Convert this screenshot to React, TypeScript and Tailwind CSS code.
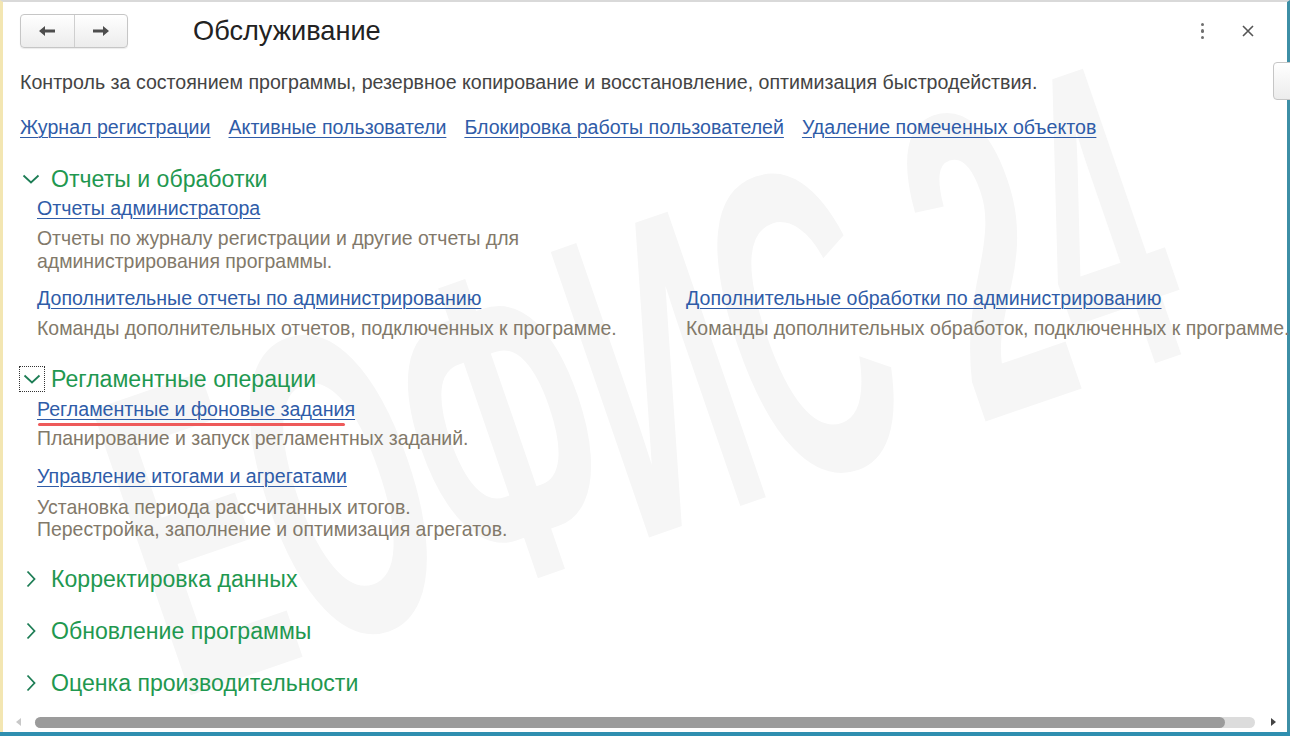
import React from "react";

function Chevron({ open }: { open: boolean }) {
  return open ? (
    <svg width="18" height="12" viewBox="0 0 18 12" className="block">
      <path d="M1.5 2.5 L9 9.5 L16.5 2.5" fill="none" stroke="#1d7d55" strokeWidth="1.8" />
    </svg>
  ) : (
    <svg width="12" height="18" viewBox="0 0 12 18" className="block">
      <path d="M2.5 1.5 L9.5 9 L2.5 16.5" fill="none" stroke="#1d7d55" strokeWidth="1.8" />
    </svg>
  );
}

function Section({ title, open, focused }: { title: string; open: boolean; focused?: boolean }) {
  return (
    <div className="flex h-[28px] items-center">
      <div
        className={
          focused
            ? "ml-[-1px] mr-[6px] flex h-[26px] w-[26px] items-center justify-center border border-dotted border-[#333]"
            : "mr-[9px] flex w-[22px] items-center justify-center"
        }
      >
        <Chevron open={open} />
      </div>
      <span className="text-[23.1px] leading-[28px] text-[#1f9850]">{title}</span>
    </div>
  );
}

function Link({ children }: { children: React.ReactNode }) {
  return (
    <a className="block w-fit cursor-pointer whitespace-nowrap text-[19.6px] leading-[22px] text-[#2f5ca8] underline decoration-[1px] underline-offset-[3px]">
      {children}
    </a>
  );
}

function Note({ children, tight }: { children: React.ReactNode; tight?: boolean }) {
  return (
    <div className={tight ? "text-[19.45px] leading-[22px] text-[#82796a]" : "text-[19.45px] leading-[23px] text-[#82796a]"}>
      {children}
    </div>
  );
}

export default function App() {
  return (
    <div className="relative h-[736px] w-[1290px] overflow-hidden bg-white font-['Liberation_Sans',Arial,sans-serif]">
      {/* watermark */}
      <div className="pointer-events-none absolute inset-0 z-0 flex items-center justify-center">
        <div className="whitespace-nowrap text-[211px] font-bold leading-[0.9] text-[#f6f6f6] [transform:translate(-5px,14px)_rotate(-19deg)_scale(1,2.08)]">
          ЕОФИС 24
        </div>
      </div>

      <div className="relative z-10 flex h-[732px] flex-col border-l-[3px] border-r-[3px] border-t-[2px] border-l-[#f3e6b2] border-r-[#3d8fa6] border-t-[#d9d9d9]">
        {/* header */}
        <div className="flex h-[46px] items-end pl-[17px]">
          <div className="flex h-[34px] w-[108px] overflow-hidden rounded-[4px] border border-[#c6c6c6] bg-gradient-to-b from-white to-[#ececec] shadow-[0_1px_1px_rgba(0,0,0,0.08)]">
            <div className="flex flex-1 items-center justify-center border-r border-[#cfcfcf]">
              <svg width="18" height="12" viewBox="0 0 18 12">
                <path d="M1 6 L7 1 L7 4.5 L17 4.5 L17 7.5 L7 7.5 L7 11 Z" fill="#4d4d4d" />
              </svg>
            </div>
            <div className="flex flex-1 items-center justify-center">
              <svg width="18" height="12" viewBox="0 0 18 12">
                <path d="M17 6 L11 1 L11 4.5 L1 4.5 L1 7.5 L11 7.5 L11 11 Z" fill="#4d4d4d" />
              </svg>
            </div>
          </div>
          <div className="mb-[2px] ml-[65px] text-[27.2px] leading-[30px] text-[#222]">Обслуживание</div>
          <div className="flex-1" />
          <div className="mb-[9px] mr-[38px] flex flex-col items-center gap-[3px]">
            <span className="h-[3.5px] w-[3.5px] rounded-full bg-[#6f6f6f]" />
            <span className="h-[3.5px] w-[3.5px] rounded-full bg-[#6f6f6f]" />
            <span className="h-[3.5px] w-[3.5px] rounded-full bg-[#6f6f6f]" />
          </div>
          <div className="mb-[11px] mr-[33px]">
            <svg width="12" height="12" viewBox="0 0 12 12">
              <path d="M1 1 L11 11 M11 1 L1 11" stroke="#555" strokeWidth="1.6" />
            </svg>
          </div>
        </div>

        {/* body */}
        <div className="relative flex-1 pl-[17px]">
          <div className="mt-[23px] whitespace-nowrap text-[19.6px] leading-[22px] text-[#444]">
            Контроль за состоянием программы, резервное копирование и восстановление, оптимизация быстродействия.
          </div>
          <div className="mt-[23px] flex gap-[18px]">
            <Link>Журнал регистрации</Link>
            <Link>Активные пользователи</Link>
            <Link>Блокировка работы пользователей</Link>
            <Link>Удаление помеченных объектов</Link>
          </div>

          <div className="mt-[27px]">
            <Section title="Отчеты и обработки" open />
          </div>
          <div className="pl-[17px]">
            <div className="mt-[4px]">
              <Link>Отчеты администратора</Link>
            </div>
            <div className="mt-[8px]">
              <Note>
                Отчеты по журналу регистрации и другие отчеты для
                <br />
                администрирования программы.
              </Note>
            </div>
            <div className="mt-[14px] grid grid-cols-[649px_1fr]">
              <div>
                <Link>Дополнительные отчеты по администрированию</Link>
                <div className="mt-[8px] whitespace-nowrap">
                  <Note>Команды дополнительных отчетов, подключенных к программе.</Note>
                </div>
              </div>
              <div>
                <Link>Дополнительные обработки по администрированию</Link>
                <div className="mt-[8px] whitespace-nowrap">
                  <Note>Команды дополнительных обработок, подключенных к программе.</Note>
                </div>
              </div>
            </div>
          </div>

          <div className="mt-[25px]">
            <Section title="Регламентные операции" open focused />
          </div>
          <div className="pl-[17px]">
            <div className="mt-[5px]">
              <Link>Регламентные и фоновые задания</Link>
            </div>
            <div className="ml-[1px] mt-[3px] h-[3px] w-[307px] rounded-full bg-[#ee5a5a]" />
            <div className="mt-[1px]">
              <Note>Планирование и запуск регламентных заданий.</Note>
            </div>
            <div className="mt-[15px]">
              <Link>Управление итогами и агрегатами</Link>
            </div>
            <div className="mt-[9px]">
              <Note tight>
                Установка периода рассчитанных итогов.
                <br />
                Перестройка, заполнение и оптимизация агрегатов.
              </Note>
            </div>
          </div>

          <div className="mt-[25px]">
            <Section title="Корректировка данных" open={false} />
          </div>
          <div className="mt-[24px]">
            <Section title="Обновление программы" open={false} />
          </div>
          <div className="mt-[24px]">
            <Section title="Оценка производительности" open={false} />
          </div>

          {/* clipped button on the right edge */}
          <div className="absolute right-[-6px] top-[14px] h-[38px] w-[20px] rounded-l-[4px] border border-[#c6c6c6] bg-gradient-to-b from-white to-[#ececec]" />
        </div>

        {/* horizontal scrollbar */}
        <div className="flex h-[20px] items-center pl-[13px] pr-[11px]">
          <svg width="6" height="8" viewBox="0 0 6 8">
            <path d="M5 0 L0 4 L5 8 Z" fill="#c8c8c8" />
          </svg>
          <div className="ml-[13px] mr-[15px] flex h-[11px] flex-1 rounded-full bg-[#dcdcdc]">
            <div className="h-full w-[1190px] rounded-full bg-[#9b9b9b]" />
          </div>
          <svg width="6" height="8" viewBox="0 0 6 8">
            <path d="M1 0 L6 4 L1 8 Z" fill="#444" />
          </svg>
        </div>
      </div>
      {/* taskbar strip */}
      <div className="h-[4px] bg-[#2f8fb0]" />
    </div>
  );
}
